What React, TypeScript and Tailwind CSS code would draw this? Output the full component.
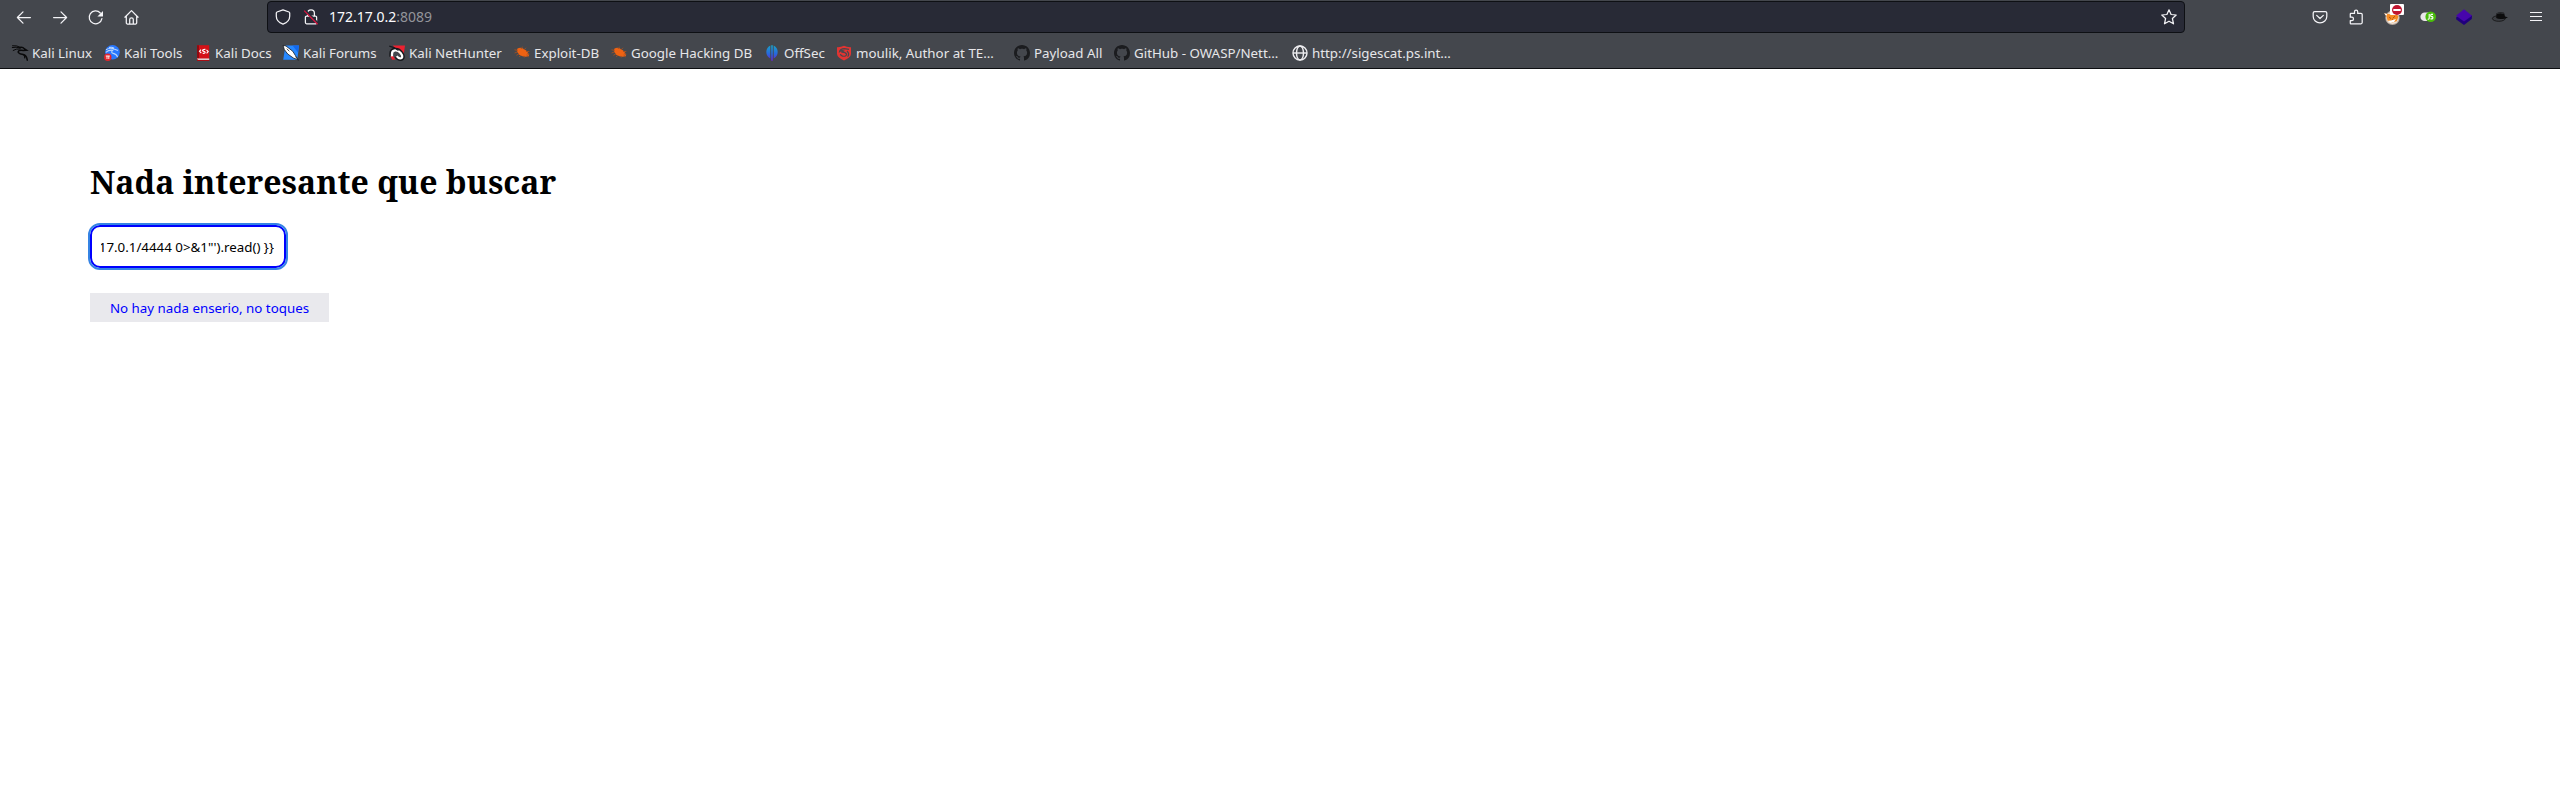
import React from "react";

const line = {
  fill: "none",
  stroke: "#f4f4f7",
  strokeWidth: 1.25,
  strokeLinecap: "round" as const,
  strokeLinejoin: "round" as const,
};

const Icon = ({ children, className = "size-4" }: { children: React.ReactNode; className?: string }) => (
  <svg viewBox="0 0 16 16" className={`${className} block shrink-0 overflow-visible`}>
    {children}
  </svg>
);

const Back = () => (
  <Icon><path {...line} d="M14.4 8.500H1.400M7 2.900 1.400 8.500 7 14.100" /></Icon>
);
const Forward = () => (
  <Icon><path {...line} d="M1.600 8.500h13M9 2.900 14.600 8.500 9 14.100" /></Icon>
);
const Reload = () => (
  <Icon>
    <path {...line} d="M13.9 9.600A6.400 6.400 0 1 1 12.300 4" />
    <path fill="#f4f4f7" d="M15 2v5.100a.5.5 0 0 1-.5.500H9.400z" />
  </Icon>
);
const Home = () => (
  <Icon>
    <path {...line} d="M.9 8.200 7.500 1.600l6.600 6.600M2.300 7v6.800a1.200 1.200 0 0 0 1.200 1.200h8a1.200 1.200 0 0 0 1.200-1.200V7M5.700 14.800V10.600a1.800 1.800 0 0 1 3.600 0v4.200" />
  </Icon>
);
const Shield = () => (
  <Icon>
    <path {...line} d="M8 .8 14 3q.7.3.7 1v3.200c0 4-3.200 6.600-6.700 8-3.500-1.400-6.700-4-6.700-8V4q0-.7.7-1z" />
  </Icon>
);
const Lock = () => (
  <Icon>
    <path {...line} d="M4.600 7V4.200a3.400 3.400 0 0 1 6.800 0V7M3.600 7h8.800a1.200 1.200 0 0 1 1.200 1.200v5.400a1.200 1.200 0 0 1-1.200 1.200H3.600a1.200 1.200 0 0 1-1.200-1.200V8.200A1.200 1.200 0 0 1 3.600 7z" />
    <path d="m1.800 1.200 13.600 13.600" stroke="#282a36" strokeWidth="2.400" />
    <path d="m1.200 1.600 13.400 13.600" stroke="#d81640" strokeWidth="1.300" />
  </Icon>
);
const Star = () => (
  <Icon>
    <path {...line} d="m8 .8 2.100 4.700 5.100.5-3.800 3.500 1.100 5.300L8 12.200l-4.500 2.600 1.100-5.300L.8 6l5.100-.5z" />
  </Icon>
);
const Pocket = () => (
  <Icon>
    <path {...line} d="M2.700 2.500h10.600a1.500 1.500 0 0 1 1.500 1.500v3.400a6.800 6.500 0 0 1-13.600 0V4a1.500 1.500 0 0 1 1.500-1.500zM4.700 6.400 8 9.500l3.300-3.100" />
  </Icon>
);
const Puzzle = () => (
  <Icon>
    <path {...line} d="M2.900 4.400h3.600V2.700a1.600 1.600 0 0 1 3.200 0v1.700H13a1.200 1.200 0 0 1 1.200 1.200v8a1.200 1.200 0 0 1-1.200 1.200H2.900a.6.6 0 0 1-.6-.6v-2.600h1.500a1.700 1.700 0 0 0 0-3.400H2.300V5a.6.6 0 0 1 .6-.6z" />
  </Icon>
);
const Menu = () => (
  <Icon><path {...line} strokeLinecap="butt" strokeWidth="1" d="M2 3.500h12M2 7.500h12M2 11.500h12" /></Icon>
);

const FoxyProxy = () => (
  <span className="relative block size-4">
    <Icon>
      <circle cx="8.500" cy="8.800" r="7.200" fill="#b9aaa0" />
      <circle cx="8.500" cy="8.800" r="6.200" fill="#eee0d0" />
      <path d="M.2 4.300 4 5.100l9.200 1 1.300 1.500-1.800 4.600-4.600 1.400-4.400-1.800-1.300-4.500z" fill="#f58b23" />
      <path d="m.2 4.200 3 .7-1 2.200zM4 11.800l3-.4 5-1.300-2 3-3.500.7z" fill="#fff" />
      <path d="m5 8 2 1.600M11 7.200 9 9M8 10.200h1" stroke="#a34c13" strokeWidth=".9" />
    </Icon>
    <span className="absolute -top-[5px] left-1.5 flex h-[11px] w-[14px] items-center justify-center rounded-[1px] bg-white">
      <svg viewBox="0 0 10 10" className="size-[10px]">
        <circle cx="5" cy="5" r="5" fill="#c01530" />
        <path d="M1.300 5h7.400" stroke="#fff" strokeWidth="2" />
      </svg>
    </span>
  </span>
);
const JsToggle = () => (
  <Icon>
    <rect x=".4" y="3.400" width="14" height="8.600" rx="4.300" fill="#e9e6e9" />
    <circle cx="10.700" cy="7.800" r="5.300" fill="#49bd0b" />
    <path d="M9.200 5v4.300q0 1-1.500.9M13 5.400h-1.600q-.7 0-.7 1t.7 1.200h.8q.7.200.7 1.100t-.7 1.200h-1.700" fill="none" stroke="#fff" strokeWidth="1.100" />
  </Icon>
);
const Layers = () => (
  <Icon>
    <path d="m0 8.600 8-4 8 2-.2 3.300L8 16 .3 10.500z" fill="#20007c" />
    <path d="m8 .2 8 6.600-8 5.800-8-5.800z" fill="#4705ac" />
  </Icon>
);
const Hat = () => (
  <Icon>
    <ellipse cx="6.800" cy="9.500" rx="6.400" ry="2.800" fill="#3b3d42" stroke="#111" strokeWidth=".8" />
    <path d="M4.200 9 4.500 4.300Q7.500 2.600 12 3.700l1 3.900 3 .7q-2.200 1.500-5.200 1.600-4.600.5-6.600-.9z" fill="#0c0c0d" />
    <path d="M4.800 4.500q3.500-.9 7 0" stroke="#45484d" strokeWidth=".6" fill="none" />
  </Icon>
);

const KaliDragon = () => (
  <Icon>
    <g fill="none" stroke="#09090a" strokeLinecap="round">
      <path d="M.5.7Q5 .2 8.300 2.300M.3 2.500q3.500-.9 8 .4M1.200 5.400q3-1.900 7-1.500" strokeWidth="1" />
      <path d="M8 2.400q3-.4 4.500 1.500l2 1.300-3 .2Q6.700 4.500 6.200 6.700c-.3 2.300 3 2.300 5.700 3q2.700 1 3.400 5.500" strokeWidth="1.500" />
      <path d="M11.500 9.600q1.500 1.300 1.200 3.200" strokeWidth="1.200" />
    </g>
  </Icon>
);
const KaliTools = () => (
  <Icon>
    <circle cx="8.500" cy="7.300" r="7.300" fill="#2777ff" />
    <path d="M2 4.800q4-2.700 8-.8l4 1.500M1.800 7.300q3-2.600 7-2.100-2.400 2.200.4 3.200 3 .4 4.400 3.500M5 2.600q3-.9 5 .7" fill="none" stroke="#b9d6fb" strokeWidth="1.100" />
    <circle cx="3.800" cy="12.200" r="3.700" fill="#e3242b" />
    <path d="M1.800 11h4M3 11v3M4.800 11v3" stroke="#fff" strokeWidth=".9" />
  </Icon>
);
const KaliDocs = () => (
  <Icon>
    <path d="M2 .2h12.200V15.800H2z" fill="#d41117" />
    <path d="M2 .2h2v13.200H2z" fill="#8e0b12" />
    <path d="M2 13.500h12.200v1.400H3.200z" fill="#e6e6e6" />
    <path d="M2 14.900h12.200v.9H2z" fill="#a40c13" />
    <path d="m6 4.600-1.500 1.700L6.300 8M11.500 4.900l1.700 1.700-1.600 1.700M10.400 4.400Q7 4.200 7.600 5.800L10 7q.8 1.500-2.300 1.400" fill="none" stroke="#fff" strokeWidth="1.100" />
  </Icon>
);
const KaliForums = () => (
  <Icon>
    <path d="M2.500.6H16l-1.700 14.200H.2z" fill="#2688ff" />
    <path d="M9.500.6H16l-1 7z" fill="#1369ee" />
    <path d="M0 .3 3 1l6.800 5.300 2.600 4.200 3 4.500-5-2L4.700 9 1.300 4.500z" fill="#fff" stroke="#17191d" strokeWidth=".8" />
    <path d="m3.800 3.700 2.500 2.600M12.500 11.500l3 3.900" stroke="#202327" strokeWidth=".8" />
  </Icon>
);
const NetHunter = () => (
  <Icon>
    <path d="M3.800.6H16l-1.800 12.500z" fill="#ed2130" />
    <path d="M2.200 11.800V8.600C2.200 4 8.500 3.200 12 7.400c3.400 4.200 1.800 6.600-.6 6.800-1.800 0-3-1-4-2.600" fill="none" stroke="#17191d" strokeWidth="3.800" />
    <path d="M3 12V9c0-4.600 5.500-4.700 8.600-1.100 2.900 3.500 1.600 5.500-.4 5.500-1.500 0-2.500-.8-3.500-2.200" fill="none" stroke="#fff" strokeWidth="2.300" />
    <path d="M.3 1.200 5 2.600 9.500 5.500" stroke="#17191d" strokeWidth="1.200" fill="none" />
    <path d="m1.600 11.500 2.600-.3 2.200 3.200-3.200.4z" fill="#ed2130" />
  </Icon>
);
const Bug = () => (
  <Icon>
    <path d="M3.200 3.700q2.800-1.600 5.300-.5l3.700 2.300q2.800 2.500 2.800 5.500-3.200 1.200-6.500.2-4-1.200-5.300-4.200z" fill="#ef6212" />
    <path d="M3.500 5.400.5 4.800M3.200 7 .6 8M5 8.800l-2.600 1.500M7 10l-1.800 2M10 10.800l.3 1.700M7 4l1.500-2.300M10 4.800l2-2M12 6.500h3.300M13 8.700l2.400.5M12.500 10l2.200 2" stroke="#a5501f" strokeWidth=".9" fill="none" />
  </Icon>
);
const OffSec = () => (
  <Icon>
    <defs>
      <linearGradient id="offsec" x1="0" y1="0" x2="0" y2="16" gradientUnits="userSpaceOnUse">
        <stop stopColor="#18a5c9" />
        <stop offset=".55" stopColor="#2868dc" />
        <stop offset="1" stopColor="#6a22d3" />
      </linearGradient>
    </defs>
    <g fill="url(#offsec)">
      <path d="M6.300.5v13A7.300 7.300 0 0 1 6.300.5z" />
      <path d="M9.700.5a7.300 7.300 0 0 1 0 13z" />
      <path d="M7.200.2h1.600v15.600H7.200z" />
    </g>
  </Icon>
);
const DragonShield = () => (
  <Icon>
    <path d="M1 2.200Q5 2.400 8 .8q3 1.600 7 1.400V9q-.5 4-7 6.400Q1.500 13 1 9z" fill="#e23432" />
    <path d="M13 4.300 8.500 3.700Q4 4 3.600 6.600q2.200-1.700 4.200-.6L5.600 7.300q4.200-.3 5 2-.4 2.500-4 1.800-2-.6-2.200-1.900M11 6q3 3 .6 5.700" fill="none" stroke="#45484d" strokeWidth="1.200" />
  </Icon>
);
const Globe = () => (
  <Icon>
    <g fill="none" stroke="#eeeef1" strokeWidth="1.400">
      <circle cx="8" cy="8" r="7" />
      <ellipse cx="8" cy="8" rx="3.500" ry="7" />
      <path d="M1 8h14" />
    </g>
  </Icon>
);
const Github = () => (
  <Icon>
    <path
      fill="#1b1c1f"
      d="M8 0C3.58 0 0 3.58 0 8c0 3.54 2.29 6.53 5.47 7.59.4.07.55-.17.55-.38 0-.19-.01-.82-.01-1.49-2.01.37-2.53-.49-2.69-.94-.09-.23-.48-.94-.82-1.13-.28-.15-.68-.52-.01-.53.63-.01 1.08.58 1.23.82.72 1.21 1.87.87 2.33.66.07-.52.28-.87.51-1.07-1.78-.2-3.64-.89-3.64-3.95 0-.87.31-1.59.82-2.15-.08-.2-.36-1.02.08-2.12 0 0 .67-.21 2.2.82.64-.18 1.32-.27 2-.27.68 0 1.36.09 2 .27 1.53-1.04 2.2-.82 2.2-.82.44 1.1.16 1.92.08 2.12.51.56.82 1.27.82 2.15 0 3.07-1.87 3.75-3.65 3.95.29.25.54.73.54 1.48 0 1.07-.01 1.93-.01 2.2 0 .21.15.46.55.38A8.013 8.013 0 0016 8c0-4.42-3.58-8-8-8z"
    />
  </Icon>
);

const bookmarks = [
  { label: "Kali Linux", icon: KaliDragon, width: "w-[92px]" },
  { label: "Kali Tools", icon: KaliTools, width: "w-[91px]" },
  { label: "Kali Docs", icon: KaliDocs, width: "w-[88px]" },
  { label: "Kali Forums", icon: KaliForums, width: "w-[106px]" },
  { label: "Kali NetHunter", icon: NetHunter, width: "w-[125px]" },
  { label: "Exploit-DB", icon: Bug, width: "w-[97px]" },
  { label: "Google Hacking DB", icon: Bug, width: "w-[153px]" },
  { label: "OffSec", icon: OffSec, width: "w-[72px]" },
  { label: "moulik, Author at TE…", icon: DragonShield, width: "w-[178px]" },
  { label: "Payload All", icon: Github, width: "w-[100px]" },
  { label: "GitHub - OWASP/Nett…", icon: Github, width: "w-[178px]" },
  { label: "http://sigescat.ps.int…", icon: Globe, width: "w-[190px]" },
];

export default function App() {
  return (
    <div className="flex h-[808px] w-full flex-col overflow-hidden bg-white font-['Noto_Sans',sans-serif]">
      <header className="h-[69px] shrink-0 border-b border-[#0d0e11] bg-[#44474d]">
        <div className="flex h-[33px] items-center pt-px">
          <nav className="flex w-[267px] items-center gap-5 pl-4">
            <Back />
            <Forward />
            <Reload />
            <Home />
          </nav>
          <div className="flex h-8 w-[1918px] items-center rounded-[4px] border border-[#0e1014] bg-[#282a36] px-[7px]">
            <Shield />
            <span className="ml-3"><Lock /></span>
            <span className="ml-2.5 flex-1 text-[14px] leading-none text-[#fbfbfe]">
              172.17.0.2<span className="text-[#93949a]">:8089</span>
            </span>
            <Star />
          </div>
          <div className="ml-auto flex items-center gap-5 pr-4">
            <Pocket />
            <Puzzle />
            <FoxyProxy />
            <JsToggle />
            <Layers />
            <Hat />
            <Menu />
          </div>
        </div>
        <div className="flex h-[35px] items-center pt-[5px] pl-3 text-[13.333px] leading-none text-[#e6e6e9]">
          {bookmarks.map(({ label, icon: Mark, width }) => (
            <div key={label} className={`flex h-4 shrink-0 items-center gap-1 whitespace-nowrap ${width}`}>
              <Mark />
              <span className="pt-0.5">{label}</span>
            </div>
          ))}
        </div>
      </header>
      <main className="flex flex-col items-start pt-[91px] pl-[90px]">
        <h1 className="h-[44px] text-[32px] leading-[44px] font-bold whitespace-nowrap text-black font-['Noto_Serif','DejaVu_Serif_Condensed','DejaVu_Serif',serif]">
          Nada interesante que buscar
        </h1>
        <div className="mt-[21px] flex h-[43px] w-[196px] items-center rounded-[10px] border-2 border-[#0000ff] bg-white pl-[9px] text-[13.333px] leading-none whitespace-nowrap text-black outline-2 outline-[#3584e4]">
          <div className="flex w-[173px] justify-end overflow-hidden pt-1.5 pb-1">
            <span>17.0.1/4444 0&gt;&amp;1"').read() {"}}"}</span>
          </div>
        </div>
        <button className="mt-[25px] h-[29px] w-[239px] bg-[#e9e9ed] pt-0.5 text-[13.333px] leading-none whitespace-nowrap text-[#0000ff]">
          No hay nada enserio, no toques
        </button>
      </main>
    </div>
  );
}
